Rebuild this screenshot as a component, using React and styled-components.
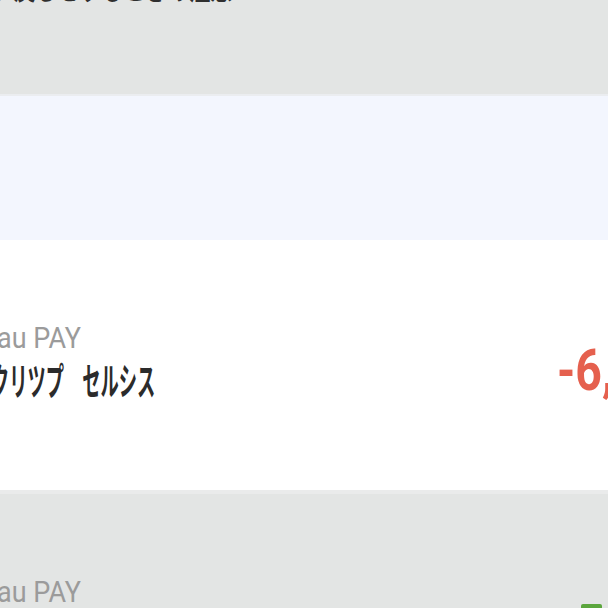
import React from "react";
import styled, { createGlobalStyle } from "styled-components";

const GlobalStyle = createGlobalStyle`
    html, body {
        margin: 0;
        padding: 0;
        background: #ffffff;
        overflow: hidden;
    }
    body {
        width: 608px;
        height: 608px;
        font-family: "Noto Sans CJK JP", "Noto Sans", sans-serif;
    }
`;

const rows = [
    { id: 1, shop: "au PAY", name: "クリツプ　セルシス", amount: "-6,000円", tone: "white" },
    { id: 2, shop: "au PAY", name: "ファミリーマート", amount: "", tone: "gray" },
];

const App = () => {
    return (
        <Page>
            <GlobalStyle />
            <Notice>
                <NoticeTitle>払い戻しをするときの注意</NoticeTitle>
            </Notice>
            <InfoBand />
            {rows.map((row) => (
                <Row key={row.id} tone={row.tone}>
                    <Left>
                        <Shop>{row.shop}</Shop>
                        <Name>{row.name}</Name>
                    </Left>
                    {row.amount ? (
                        <Amount>{row.amount}</Amount>
                    ) : (
                        <Badge>利用</Badge>
                    )}
                </Row>
            ))}
        </Page>
    );
};

export default App;

const Page = styled.div`
    width: 608px;
    height: 608px;
    overflow: hidden;
    display: flex;
    flex-direction: column;
`;

const Notice = styled.div`
    height: 94px;
    flex-shrink: 0;
    background: #e3e5e4;
    border-bottom: 2px solid #ebedf0;
    overflow: hidden;
`;

const NoticeTitle = styled.div`
    width: max-content;
    margin: -26px 0 0 -30px;
    font-size: 28px;
    line-height: 28px;
    font-weight: 700;
    color: #2f2f2f;
    white-space: nowrap;
    transform: scaleX(0.78);
    transform-origin: left center;
`;

const InfoBand = styled.div`
    height: 144px;
    flex-shrink: 0;
    background: #f3f6fe;
`;

const Row = styled.div`
    height: 250px;
    flex-shrink: 0;
    box-sizing: border-box;
    display: grid;
    grid-template-columns: 557px 1fr;
    align-items: start;
    padding-top: 81px;
    background: ${(p) => (p.tone === "gray" ? "#e3e5e4" : "#ffffff")};
    border-top: ${(p) => (p.tone === "gray" ? "4px solid #eaebeb" : "none")};
`;

const Left = styled.div`
    display: flex;
    flex-direction: column;
    margin-left: -3px;
`;

const Shop = styled.span`
    display: inline-block;
    font-family: Roboto, "Noto Sans", sans-serif;
    font-size: 29px;
    line-height: 34px;
    color: #9b9b9b;
    transform: scaleX(0.93);
    transform-origin: left center;
    white-space: nowrap;
`;

const Name = styled.span`
    display: inline-block;
    margin-top: 4px;
    margin-left: -6px;
    font-family: "Noto Sans CJK JP", sans-serif;
    font-size: 38px;
    line-height: 40px;
    font-weight: 700;
    color: #2b2b2b;
    transform: scaleX(0.48);
    transform-origin: left center;
    white-space: nowrap;
`;

const Amount = styled.span`
    display: inline-block;
    margin-top: 20px;
    font-family: Roboto, "Noto Sans", sans-serif;
    font-size: 58px;
    line-height: 58px;
    font-weight: 700;
    color: #e5604e;
    transform: scaleX(0.8);
    transform-origin: left center;
    white-space: nowrap;
`;

const Badge = styled.span`
    display: block;
    width: 21px;
    height: 30px;
    margin: 29px 0 0 24px;
    background: #5ba63d;
    border-radius: 2px;
    color: transparent;
    font-size: 10px;
    overflow: hidden;
`;
